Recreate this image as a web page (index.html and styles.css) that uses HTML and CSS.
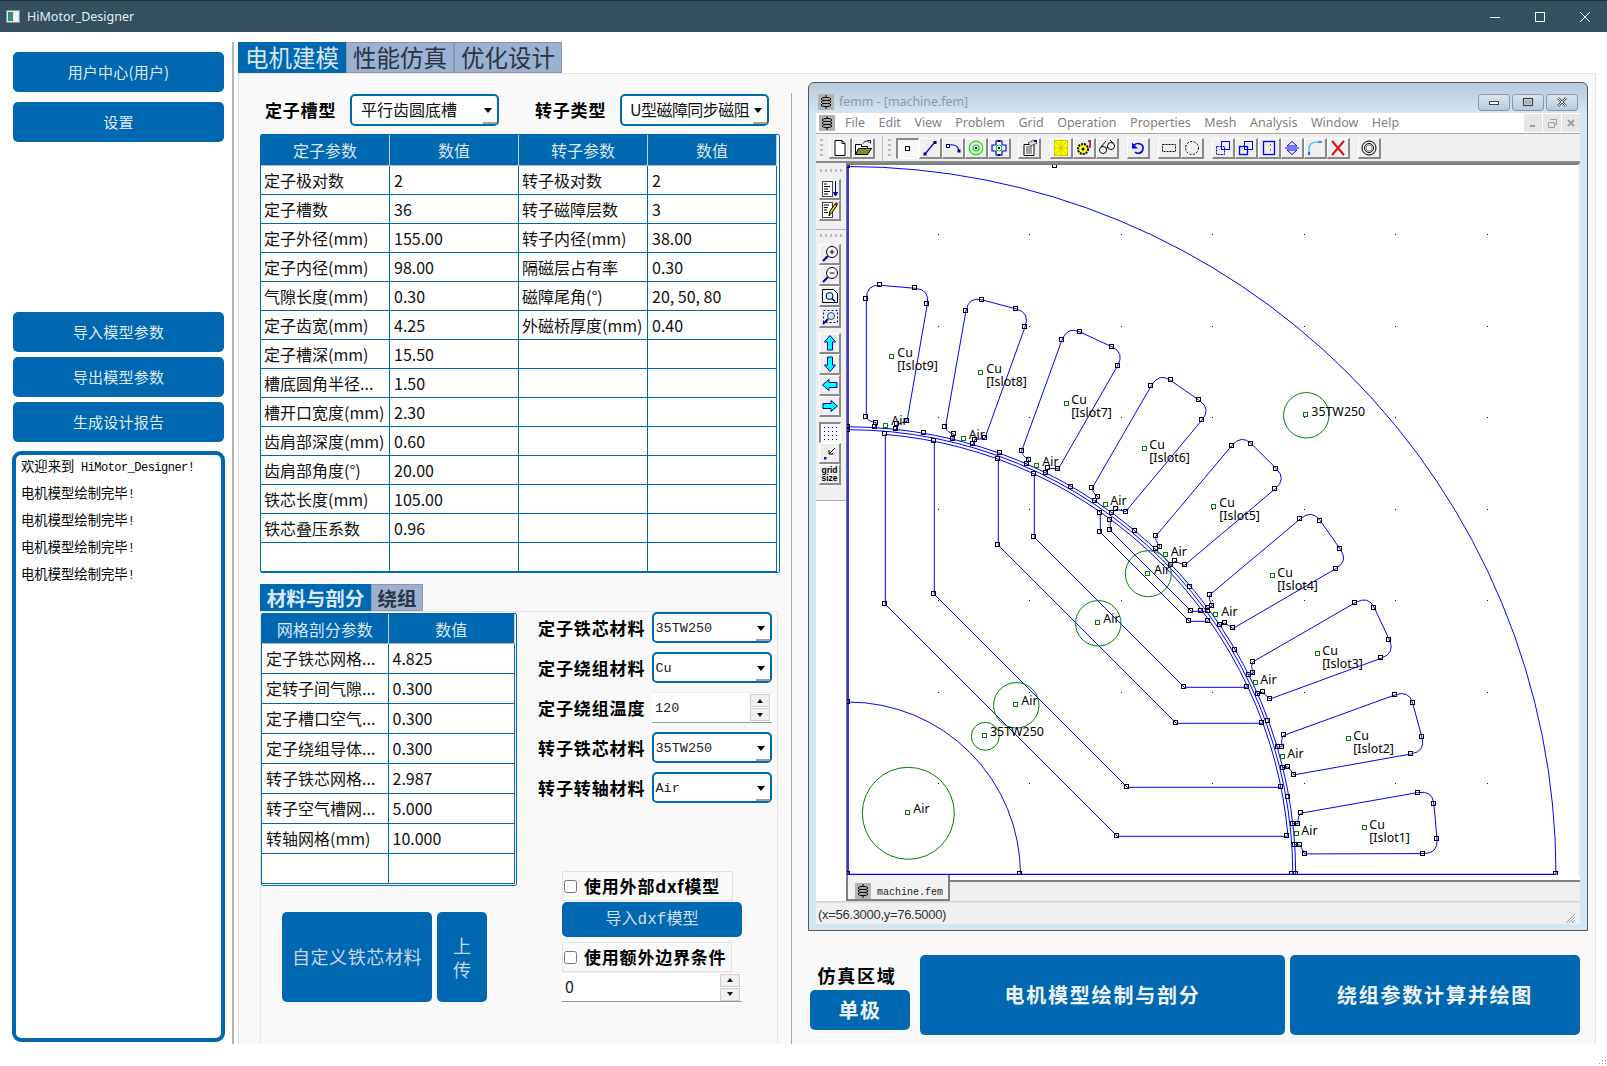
FILE: index.html
```html
<!DOCTYPE html>
<html lang="zh">
<head>
<meta charset="utf-8">
<title>HiMotor_Designer</title>
<link rel="stylesheet" href="styles.css">
</head>
<body>
<header class="titlebar">
  <svg class="app-icon" viewBox="0 0 14 13"><rect x="0.5" y="0.5" width="13" height="12" fill="#dfe6ea" stroke="#8c979d"/><rect x="2" y="2" width="5" height="9" fill="#2f8f6f"/><rect x="8" y="2" width="4" height="9" fill="#f4f6f7"/></svg>
  <span class="app-name">HiMotor_Designer</span>
  <div class="caption">
    <span class="cap-btn"><svg width="12" height="12" viewBox="0 0 12 12"><path d="M1 6.5h10" stroke="#fff" fill="none"/></svg></span>
    <span class="cap-btn"><svg width="12" height="12" viewBox="0 0 12 12"><rect x="1.5" y="1.5" width="9" height="9" stroke="#fff" fill="none"/></svg></span>
    <span class="cap-btn"><svg width="12" height="12" viewBox="0 0 12 12"><path d="M1 1l10 10M11 1L1 11" stroke="#fff" fill="none"/></svg></span>
  </div>
</header>

<div class="main">
  <aside class="sidebar">
    <button class="side-btn">用户中心(用户)</button>
    <button class="side-btn side-next">设置</button>
    <button class="side-btn side-far">导入模型参数</button>
    <button class="side-btn side-close">导出模型参数</button>
    <button class="side-btn side-close">生成设计报告</button>
    <div class="log">
      <div class="log-lines">
        <p>欢迎来到<span class="log-latin"> HiMotor_Designer!</span></p>
        <p>电机模型绘制完毕<span class="log-latin">!</span></p>
        <p>电机模型绘制完毕<span class="log-latin">!</span></p>
        <p>电机模型绘制完毕<span class="log-latin">!</span></p>
        <p>电机模型绘制完毕<span class="log-latin">!</span></p>
      </div>
    </div>
  </aside>
  <div class="vline"></div>

  <div class="content">
    <nav class="tabs">
      <span class="tab tab-on">电机建模</span>
      <span class="tab">性能仿真</span>
      <span class="tab">优化设计</span>
    </nav>
    <div class="pane">
      <section class="model">
        <div class="type-row">
          <label class="type-label">定子槽型</label>
          <div class="combo combo-type"><span class="combo-cjk">平行齿圆底槽</span></div>
          <label class="type-label type-second">转子类型</label>
          <div class="combo combo-type combo-rotor"><span class="combo-cjk tight">U型磁障同步磁阻</span></div>
        </div>

        <div class="grid-wrap wrap-main">
          <table class="data data-main">
            <thead><tr><th>定子参数</th><th>数值</th><th>转子参数</th><th>数值</th></tr></thead>
            <tbody>
              <tr><td>定子极对数</td><td class="val">2</td><td>转子极对数</td><td class="val">2</td></tr>
              <tr><td>定子槽数</td><td class="val">36</td><td>转子磁障层数</td><td class="val">3</td></tr>
              <tr><td>定子外径(mm)</td><td class="val">155.00</td><td>转子内径(mm)</td><td class="val">38.00</td></tr>
              <tr><td>定子内径(mm)</td><td class="val">98.00</td><td>隔磁层占有率</td><td class="val">0.30</td></tr>
              <tr><td>气隙长度(mm)</td><td class="val">0.30</td><td>磁障尾角(°)</td><td class="val">20, 50, 80</td></tr>
              <tr><td>定子齿宽(mm)</td><td class="val">4.25</td><td>外磁桥厚度(mm)</td><td class="val">0.40</td></tr>
              <tr><td>定子槽深(mm)</td><td class="val">15.50</td><td></td><td></td></tr>
              <tr><td>槽底圆角半径...</td><td class="val">1.50</td><td></td><td></td></tr>
              <tr><td>槽开口宽度(mm)</td><td class="val">2.30</td><td></td><td></td></tr>
              <tr><td>齿肩部深度(mm)</td><td class="val">0.60</td><td></td><td></td></tr>
              <tr><td>齿肩部角度(°)</td><td class="val">20.00</td><td></td><td></td></tr>
              <tr><td>铁芯长度(mm)</td><td class="val">105.00</td><td></td><td></td></tr>
              <tr><td>铁芯叠压系数</td><td class="val">0.96</td><td></td><td></td></tr>
              <tr><td>&nbsp;</td><td></td><td></td><td></td></tr>
            </tbody>
          </table>
        </div>

        <nav class="subtabs">
          <span class="subtab subtab-on">材料与剖分</span>
          <span class="subtab">绕组</span>
        </nav>
        <div class="subpane">
          <div class="sub-left">
            <div class="grid-wrap wrap-mesh">
              <table class="data data-mesh">
                <thead><tr><th>网格剖分参数</th><th>数值</th></tr></thead>
                <tbody>
                  <tr><td>定子铁芯网格...</td><td class="val">4.825</td></tr>
                  <tr><td>定转子间气隙...</td><td class="val">0.300</td></tr>
                  <tr><td>定子槽口空气...</td><td class="val">0.300</td></tr>
                  <tr><td>定子绕组导体...</td><td class="val">0.300</td></tr>
                  <tr><td>转子铁芯网格...</td><td class="val">2.987</td></tr>
                  <tr><td>转子空气槽网...</td><td class="val">5.000</td></tr>
                  <tr><td>转轴网格(mm)</td><td class="val">10.000</td></tr>
                  <tr><td>&nbsp;</td><td></td></tr>
                </tbody>
              </table>
            </div>
            <div class="custom-row">
              <button class="blue-btn custom-btn">自定义铁芯材料</button>
              <button class="blue-btn upload-btn">上<br>传</button>
            </div>
          </div>
          <div class="sub-right">
            <div class="form">
              <label class="form-label">定子铁芯材料</label>
              <div class="combo combo-mat"><span class="mono">35TW250</span></div>
              <label class="form-label">定子绕组材料</label>
              <div class="combo combo-mat"><span class="mono">Cu</span></div>
              <label class="form-label">定子绕组温度</label>
              <div class="spin"><span class="mono spin-text">120</span><span class="spin-arrows"><i class="up"></i><i class="down"></i></span></div>
              <label class="form-label">转子铁芯材料</label>
              <div class="combo combo-mat"><span class="mono">35TW250</span></div>
              <label class="form-label">转子转轴材料</label>
              <div class="combo combo-mat"><span class="mono">Air</span></div>
            </div>
            <div class="extras">
              <label class="check check-dxf"><input type="checkbox">使用外部dxf模型</label>
              <button class="blue-btn dxf-btn">导入<span class="dxf-latin">dxf</span>模型</button>
              <label class="check check-bound"><input type="checkbox">使用额外边界条件</label>
              <div class="spin spin-wide"><span class="spin-big">0</span><span class="spin-arrows"><i class="up"></i><i class="down"></i></span></div>
            </div>
          </div>
        </div>
      </section>
      <div class="vsep"></div>

      <section class="sim">
        <div class="femm">
          <div class="femm-title">
            <svg class="coil" viewBox="0 0 16 16"><rect width="16" height="16" fill="#b3b3b3"/><path d="M8 1v2M8 13v2" stroke="#000"/><g fill="none" stroke="#000"><ellipse cx="8" cy="5" rx="5" ry="1.6"/><ellipse cx="8" cy="8" rx="5" ry="1.6"/><ellipse cx="8" cy="11" rx="5" ry="1.6"/></g></svg>
            <span class="femm-name">femm - [machine.fem]</span>
            <div class="femm-caps">
              <span class="femm-cap"><svg width="12" height="8" viewBox="0 0 12 8"><rect x="1.5" y="3.5" width="9" height="3" fill="#f4f4f4" stroke="#444"/></svg></span>
              <span class="femm-cap"><svg width="12" height="10" viewBox="0 0 12 10"><rect x="1.5" y="1.5" width="9" height="7" fill="none" stroke="#444" stroke-width="1.2"/><rect x="4" y="4" width="4" height="2" fill="#fff" stroke="#444" stroke-width=".6"/></svg></span>
              <span class="femm-cap"><svg width="12" height="10" viewBox="0 0 12 10"><path d="M2 1l8 8M10 1L2 9" stroke="#444" stroke-width="2.4" fill="none"/><path d="M2 1l8 8M10 1L2 9" stroke="#fff" stroke-width="1" fill="none"/></svg></span>
            </div>
          </div>
          <div class="femm-menu">
            <svg class="coil coil-menu" viewBox="0 0 16 16"><rect width="16" height="16" fill="#b3b3b3"/><path d="M8 1v2M8 13v2" stroke="#000"/><g fill="none" stroke="#000"><ellipse cx="8" cy="5" rx="5" ry="1.6"/><ellipse cx="8" cy="8" rx="5" ry="1.6"/><ellipse cx="8" cy="11" rx="5" ry="1.6"/></g></svg>
            <span>File</span><span>Edit</span><span>View</span><span>Problem</span><span>Grid</span><span>Operation</span><span>Properties</span><span>Mesh</span><span>Analysis</span><span>Window</span><span>Help</span>
            <div class="mdi-caps">
              <span class="mdi-cap"><svg width="10" height="10" viewBox="0 0 10 10"><path d="M2 8h5" stroke="#98a0a8" stroke-width="2"/></svg></span>
              <span class="mdi-cap"><svg width="11" height="11" viewBox="0 0 11 11"><path d="M3.5 1.5h6v5h-2M1.5 4.500h6v5h-6z" stroke="#98a0a8" fill="none"/></svg></span>
              <span class="mdi-cap"><svg width="10" height="10" viewBox="0 0 10 10"><path d="M2 2l6 6M8 2L2 8" stroke="#98a0a8" stroke-width="2"/></svg></span>
            </div>
          </div>
          <div class="femm-toolbar">
            <i class="grip"></i>
            <span class="tb"><svg viewBox="0 0 18 18"><path d="M4 1.500h7l3 3v12H4z" fill="#fff" stroke="#000"/><path d="M11 1.500v3h3" fill="none" stroke="#000"/></svg></span>
            <span class="tb"><svg viewBox="0 0 18 18"><path d="M1.500 15.500v-10h6v2h6v8z" fill="#fff" stroke="#000"/><path d="M1.500 15.500l3-6h13l-4 6z" fill="#8a8a1a" stroke="#000"/><path d="M9 4.500c2-3 5-3 6-1" fill="none" stroke="#000"/><path d="M13.500 1.500h3v3" fill="none" stroke="#00a"/></svg></span>
            <i class="tb-sep"></i><i class="grip"></i>
            <span class="tb tb-on"><svg viewBox="0 0 18 18"><rect x="6.500" y="6.500" width="4" height="4" fill="none" stroke="#000"/></svg></span>
            <span class="tb"><svg viewBox="0 0 18 18"><path d="M4 15L14 3" stroke="#00f" stroke-width="1.300"/><rect x="2.500" y="13.500" width="3" height="3" fill="#006"/><rect x="12.500" y="2" width="3" height="3" fill="#006"/></svg></span>
            <span class="tb"><svg viewBox="0 0 18 18"><path d="M4 7c2-2 9-2 11 4" fill="none" stroke="#00f" stroke-width="1.200"/><rect x="2.500" y="5.500" width="3" height="3" fill="#fff" stroke="#006"/><rect x="13.500" y="10.500" width="3" height="3" fill="#006"/></svg></span>
            <span class="tb"><svg viewBox="0 0 18 18"><circle cx="9" cy="9" r="6.800" fill="none" stroke="#0e0" stroke-width="1.200"/><circle cx="9" cy="9" r="3" fill="none" stroke="#0c0" stroke-width="1.200"/><rect x="8" y="8" width="2" height="2" fill="#006"/></svg></span>
            <span class="tb"><svg viewBox="0 0 18 18"><path d="M6 2h6v4h4v6h-4v4H6v-4H2V6h4z" fill="#fff" stroke="#00f" stroke-width="1.200"/><circle cx="9" cy="9" r="3" fill="none" stroke="#0c0"/><rect x="8" y="8" width="2" height="2" fill="#006"/><rect x="7.500" y="1" width="3" height="2" fill="#006"/><rect x="7.500" y="15" width="3" height="2" fill="#006"/></svg></span>
            <span class="tb tb-props"><svg viewBox="0 0 18 18"><path d="M4 5.500h10v11H4z" fill="#fff" stroke="#000"/><path d="M6 8h6M6 10h6M6 12h6M6 14h6" stroke="#444"/><path d="M8 4l6-3 3 3-6 3z" fill="#ddd" stroke="#555"/><rect x="14" y="1" width="3" height="2" fill="#00a"/></svg></span>
            <span class="tb tb-mesh"><svg viewBox="0 0 18 18"><rect x="2.500" y="1.500" width="13" height="15" fill="#ff0" stroke="#d0c800"/><path d="M2.500 9h13M9 1.500v15M2.500 1.500L9 9M15.500 1.500L9 9M2.500 16.500L9 9M15.500 16.500L9 9" stroke="#b8b000" stroke-width=".7" fill="none"/></svg></span>
            <span class="tb"><svg viewBox="0 0 18 18"><circle cx="8" cy="10" r="5" fill="#ff0" stroke="#000" stroke-width="2" stroke-dasharray="2 1"/><circle cx="8" cy="10" r="1.500" fill="#000"/><path d="M13 2h3M15 2v7" stroke="#a00" stroke-width="1.500"/></svg></span>
            <span class="tb"><svg viewBox="0 0 18 18"><circle cx="5" cy="11" r="3.500" fill="#fff" stroke="#000"/><circle cx="13" cy="7" r="3.500" fill="#fff" stroke="#000"/><path d="M8 9.500l2-1.500M3 8l5-6M15 4L12 1" fill="none" stroke="#000"/></svg></span>
            <span class="tb tb-gap-s"><svg viewBox="0 0 18 18"><path d="M5 6c4-3 10-1 9 4s-6 5-8 3" fill="none" stroke="#00f" stroke-width="1.600"/><path d="M3 3.500v6h6z" fill="#00f"/></svg></span>
            <span class="tb tb-gap-s"><svg viewBox="0 0 18 18"><rect x="2.500" y="5.500" width="13" height="7" fill="none" stroke="#000" stroke-dasharray="2 1"/></svg></span>
            <span class="tb"><svg viewBox="0 0 18 18"><circle cx="9" cy="9" r="6.500" fill="none" stroke="#000" stroke-dasharray="2 1.500"/></svg></span>
            <span class="tb tb-gap-s"><svg viewBox="0 0 18 18"><rect x="7.500" y="2.500" width="8" height="8" fill="none" stroke="#00f"/><rect x="2.500" y="7.500" width="8" height="8" fill="none" stroke="#00f" stroke-dasharray="2 1"/></svg></span>
            <span class="tb"><svg viewBox="0 0 18 18"><rect x="7.500" y="2.500" width="8" height="8" fill="none" stroke="#00f"/><rect x="2.500" y="7.500" width="8" height="8" fill="none" stroke="#00f" stroke-width="1.300"/></svg></span>
            <span class="tb"><svg viewBox="0 0 18 18"><rect x="3.500" y="2.500" width="11" height="13" fill="none" stroke="#00f" stroke-width="1.300"/><path d="M10 6h1M10 11h1" stroke="#000"/></svg></span>
            <span class="tb"><svg viewBox="0 0 18 18"><path d="M2 9h14" stroke="#00f"/><path d="M9 2.500l5 4.500H4zM9 15.500l5-4.500H4z" fill="none" stroke="#00f"/></svg></span>
            <span class="tb"><svg viewBox="0 0 18 18"><path d="M3 16V9c0-3 3-6 7-6h2" fill="none" stroke="#0cf" stroke-width="1.200"/><path d="M12 3h4M3 16v-3" stroke="#00f" stroke-width="1.200"/></svg></span>
            <span class="tb"><svg viewBox="0 0 18 18"><path d="M3 2l12 14M15 2L3 16" stroke="#e01010" stroke-width="2"/></svg></span>
            <span class="tb tb-gap-s"><svg viewBox="0 0 18 18"><circle cx="9" cy="9" r="7" fill="none" stroke="#000"/><circle cx="9" cy="9" r="4.500" fill="none" stroke="#000"/><circle cx="9" cy="9" r="3" fill="none" stroke="#888"/></svg></span>
          </div>
          <div class="femm-work">
            <div class="side-tools">
              <div class="lt-panel">
                <i class="hgrip"></i>
                <span class="lt"><svg viewBox="0 0 18 18"><rect x="1.500" y="1.500" width="10" height="15" fill="#fff" stroke="#444"/><path d="M3 4h3M3 6.500h6M3 9h4M3 11.500h6M3 14h4" stroke="#000"/><path d="M14.500 1v14M12.500 12.500l2 3.500 2-3.500z" stroke="#00a" fill="#00a"/></svg></span>
                <span class="lt"><svg viewBox="0 0 18 18"><rect x="1.500" y="1.500" width="10" height="15" fill="#fff" stroke="#444"/><path d="M3 4h5M3 6.500h4M3 9h3M3 11.500h4" stroke="#000"/><path d="M8 15l1-5 5-7 2 1.500-5 7z" fill="#fc0" stroke="#000"/><path d="M14 3l2 1.500 1-2-2-1.500z" fill="#a00"/></svg></span>
                <i class="lt-sep"></i>
                <i class="hgrip"></i>
                <span class="lt"><svg viewBox="0 0 18 18"><circle cx="11" cy="7" r="5.500" fill="#fff" stroke="#000"/><path d="M8.500 7h5M11 4.500v5" stroke="#000"/><path d="M7 11l-5 5" stroke="#00a" stroke-width="2.200"/></svg></span>
                <span class="lt"><svg viewBox="0 0 18 18"><circle cx="11" cy="7" r="5.500" fill="#fff" stroke="#000"/><path d="M8.500 7h5" stroke="#000"/><path d="M7 11l-5 5" stroke="#00a" stroke-width="2.200"/></svg></span>
                <span class="lt"><svg viewBox="0 0 18 18"><path d="M1.500 2.500h11l4 4v9h-15z" fill="#fff" stroke="#000"/><circle cx="8.500" cy="9" r="3.500" fill="#bfefff" stroke="#000"/><path d="M11 11.500l3 3" stroke="#00a" stroke-width="1.600"/></svg></span>
                <span class="lt lt-last"><svg viewBox="0 0 18 18"><rect x="2.500" y="2.500" width="14" height="12" fill="none" stroke="#00a" stroke-dasharray="2 2"/><circle cx="10" cy="8" r="3.500" fill="#bfefff" stroke="#444"/><path d="M7 11l-5 5" stroke="#00a" stroke-width="2"/></svg></span>
                <span class="lt"><svg viewBox="0 0 18 18"><path d="M9 1.500l5.500 6.500h-3v8h-5V8h-3z" fill="#0ff" stroke="#00a"/></svg></span>
                <span class="lt"><svg viewBox="0 0 18 18"><path d="M9 16.500l5.500-6.500h-3V2h-5v8h-3z" fill="#0ff" stroke="#00a"/></svg></span>
                <span class="lt"><svg viewBox="0 0 18 18"><path d="M1.500 9L8 3.500v3h8v5H8v3z" fill="#0ff" stroke="#00a"/></svg></span>
                <span class="lt lt-last"><svg viewBox="0 0 18 18"><path d="M16.500 9L10 3.500v3H2v5h8v3z" fill="#0ff" stroke="#00a"/></svg></span>
                <span class="lt lt-on"><svg viewBox="0 0 18 18"><path d="M2 3.500h14M2 7.500h14M2 11.500h14M2 15.500h14" stroke="#00f" stroke-dasharray="1 3"/></svg></span>
                <span class="lt"><svg viewBox="0 0 18 18"><path d="M14 4L8 10M8 6v4h4" stroke="#000" fill="none"/><rect x="3" y="13" width="2.500" height="2.500" fill="#00f"/></svg></span>
                <span class="lt lt-text">grid<br>size</span>
              </div>
            </div>
            <div class="canvas">
              <svg id="drawing" class="drawing" viewBox="847 165 731 710" width="731" height="710">
                <g fill="none" stroke="#00f" stroke-width="1">
                  <path d="M848 166.500A708 708 0 0 1 1556 874.500"/>
                  <path d="M848 702A172.500 172.500 0 0 1 1020.500 874.500"/>
                  <path d="M848 426.800A447.700 447.700 0 0 1 1295.700 874.500"/>
                  <path d="M848 429.700A444.800 444.800 0 0 1 1292.800 874.500"/>
                  <path d="M885.300 434.400A441.700 441.700 0 0 1 1288 836.300"/>
                  <path d="M885.300 434.400V604.300L1117.300 836.300H1287.300"/>
                  <path d="M934.300 441.300V594.300L1127.300 787.300H1280.700"/>
                  <path d="M998.300 459.300V545.300L1176.300 723.300H1262.300"/>
                  <path d="M1034.300 474.300V537.300L1184.300 687.300H1247.300"/>
                  <path d="M1100.300 513.300V532.300L1189.300 621.300H1208.300"/>
                  <path d="M1110.300 520.300V530.300L1191.300 611.300H1207.700"/>
                  <path d="M848 165V875M847 874.500H1556" stroke-width="1.600"/>
                </g>
                <g id="slots" fill="none" stroke="#00f" stroke-width="1"></g>
                <g fill="none" stroke="#008000" stroke-width="1">
                  <circle cx="1148.300" cy="573.700" r="23"/>
                  <circle cx="1098.300" cy="623.300" r="22.700"/>
                  <circle cx="1016.300" cy="705.300" r="22.700"/>
                  <circle cx="985.300" cy="736.300" r="14"/>
                  <circle cx="908.300" cy="813.300" r="46"/>
                  <circle cx="1306.300" cy="415.300" r="22.700"/>
                </g>
                <g id="dots" fill="#000080"></g>
                <g id="nodes" fill="none" stroke="#000" stroke-width="1" shape-rendering="crispEdges"></g>
                <g id="blocks" fill="none" stroke="#008000" stroke-width="1" shape-rendering="crispEdges"></g>
                <g class="draw-text" transform="translate(0 .7)">
                  <text x="897.300" y="356.700">Cu</text><text x="897.300" y="369.300">[Islot9]</text>
                  <text x="986.300" y="372.700">Cu</text><text x="986.300" y="385.300">[Islot8]</text>
                  <text x="1071.300" y="403.700">Cu</text><text x="1071.300" y="416.300">[Islot7]</text>
                  <text x="1149.300" y="448.700">Cu</text><text x="1149.300" y="461.300">[Islot6]</text>
                  <text x="1219.300" y="506.700">Cu</text><text x="1219.300" y="519.300">[Islot5]</text>
                  <text x="1277.300" y="576.700">Cu</text><text x="1277.300" y="589.300">[Islot4]</text>
                  <text x="1322.300" y="654.700">Cu</text><text x="1322.300" y="667.300">[Islot3]</text>
                  <text x="1353.300" y="739.700">Cu</text><text x="1353.300" y="752.300">[Islot2]</text>
                  <text x="1369.300" y="828.700">Cu</text><text x="1369.300" y="841.300">[Islot1]</text>
                  <text x="891.300" y="424.300">Air</text>
                  <text x="968.700" y="437.900">Air</text>
                  <text x="1042.300" y="464.900">Air</text>
                  <text x="1110.300" y="503.900">Air</text>
                  <text x="1170.700" y="555.300">Air</text>
                  <text x="1221.300" y="614.900">Air</text>
                  <text x="1260.300" y="682.900">Air</text>
                  <text x="1287.300" y="756.900">Air</text>
                  <text x="1301.300" y="833.900">Air</text>
                  <text x="1154" y="573">Air</text>
                  <text x="1103.300" y="622">Air</text>
                  <text x="1021.300" y="704">Air</text>
                  <text x="990" y="735.700">35TW250</text>
                  <text x="913.300" y="812.700">Air</text>
                  <text x="1311.300" y="415">35TW250</text>
                </g>
              </svg>
            </div>
          </div>
          <div class="femm-tabs">
            <div class="tab-track">
              <div class="doc-tab">
                <svg class="coil coil-tab" viewBox="0 0 16 16"><rect width="16" height="16" fill="#b3b3b3"/><path d="M8 1v2M8 13v2" stroke="#000"/><g fill="none" stroke="#000"><ellipse cx="8" cy="5" rx="5" ry="1.600"/><ellipse cx="8" cy="8" rx="5" ry="1.600"/><ellipse cx="8" cy="11" rx="5" ry="1.600"/></g></svg>
                <span class="doc-name">machine.fem</span>
              </div>
            </div>
          </div>
          <div class="femm-status">
            <span class="coords">(x=56.3000,y=76.5000)</span>
            <svg class="status-grip" width="12" height="12" viewBox="0 0 12 12"><path d="M11 2L2 11M11 5L5 11M11 8l-3 3" stroke="#999" fill="none"/></svg>
          </div>
        </div>

        <div class="sim-bar">
          <div class="region">
            <label class="region-label">仿真区域</label>
            <button class="blue-btn action region-btn">单极</button>
          </div>
          <button class="blue-btn action draw-btn">电机模型绘制与剖分</button>
          <button class="blue-btn action wind-btn">绕组参数计算并绘图</button>
        </div>
      </section>
    </div>
  </div>
</div>
<svg class="page-grip" width="10" height="10" viewBox="0 0 10 10"><path d="M8 1h1v1H8zM5 4h1v1H5zM8 4h1v1H8zM2 7h1v1H2zM5 7h1v1H5zM8 7h1v1H8z" fill="#999"/></svg>
<script src="app.js"></script>
</body>
</html>
```
FILE: styles.css
```css
* { box-sizing: border-box; }
html, body { margin: 0; padding: 0; }
body {
  width: 1607px; height: 1066px; overflow: hidden; position: relative;
  background: #fff; color: #000;
  font-family: "Noto Sans CJK SC", "Noto Sans", sans-serif;
}
button { font-family: inherit; border: 0; padding: 0; cursor: default; }
p { margin: 0; }

/* title bar */
.titlebar {
  height: 32px; display: flex; align-items: center;
  background: #34505f; border-top: 1px solid #20303a; color: #e6edf1;
}
.app-icon { width: 14px; height: 13px; margin-left: 6px; }
.app-name { margin: 0 0 0 7px; font: 12.5px/18px "Noto Sans", sans-serif; }
.caption { margin-left: auto; display: flex; }
.cap-btn { width: 45px; height: 31px; display: flex; align-items: center; justify-content: center; }

/* layout */
.main { height: 1012px; display: flex; }
.sidebar { width: 232px; padding: 20px 0 0 13px; display: flex; flex-direction: column; }
.vline { width: 2px; margin-top: 10px; background: #b4b4b4; }
.content { width: 1358px; margin-left: 4px; display: flex; flex-direction: column; }

/* sidebar */
.side-btn {
  width: 211px; height: 40px; border-radius: 5px; padding-bottom: 2px;
  background: #0068b0; color: #dfe9f2; font-size: 15px; letter-spacing: .2px;
}
.side-next { margin-top: 10px; }
.side-far { margin-top: 170px; }
.side-close { margin-top: 5px; }
.log {
  width: 213px; height: 591px; margin: 9px 0 0 -1px;
  background: #fff; border: 4px solid #0068b0; border-radius: 9px; padding-left: 5px;
}
.log-lines { margin-top: -3px; }
.log p { font-size: 13.33px; height: 27px; line-height: 27px; white-space: pre; overflow: hidden; }
.log-latin { font-family: "Liberation Mono", monospace; font-size: 12px; letter-spacing: -.53px; }

/* tabs */
.tabs { margin-top: 10px; height: 31px; display: flex; }
.tab {
  width: 108px; height: 31px; background: #9ab1d3; border: 1px solid #8d97a6;
  color: #2b3440; font-size: 23.5px; line-height: 29px; text-align: center;
}
.tab-on { background: #0068b0; border-color: #0068b0; color: #d6e4f0; }
.pane { flex: 1; display: flex; background: #f9f9f9; border: 1px solid #e4e4e4; border-bottom: 0; }

/* model */
.model { width: 552px; padding-left: 21px; display: flex; flex-direction: column; }
.vsep { width: 1px; margin-top: 19px; background: #a6a6a6; }
.type-row { margin-top: 20px; height: 32px; display: flex; align-items: center; }
.type-label { margin-left: 5px; font-size: 17px; font-weight: 700; letter-spacing: .8px; line-height: 24px; width: 85px; white-space: nowrap; }
.type-second { margin-left: 36px; }
.combo {
  position: relative; display: flex; align-items: center;
  background: #fff; border: 2.5px solid #0068b0; border-radius: 5px;
}
.combo::before {
  content: ""; position: absolute; right: 5px; top: 50%; margin-top: -2px;
  border: 4px solid transparent; border-top: 5px solid #000; border-bottom: 0;
}
.combo::after {
  content: ""; position: absolute; right: 0; bottom: 0; width: 14px; height: 2px; background: #a0a0a0;
}
.combo-type { width: 149px; height: 32px; padding: 0 0 2px 9px; }
.combo-cjk { font-size: 16px; line-height: 22px; white-space: nowrap; color: #111; }
.tight { letter-spacing: -.55px; margin-left: 0; }
.combo-rotor { padding-left: 8px; }

/* tables */
.grid-wrap { border: 1px solid #0068b0; border-radius: 2px; background: #fff; }
.wrap-main { width: 520px; height: 439px; margin-top: 8px; }
.wrap-mesh { width: 256px; height: 273px; margin: 1px 0 0 0; }
.data { border-collapse: separate; border-spacing: 0; table-layout: fixed; }
.data-main { width: 516px; }
.data-mesh { width: 253px; }
.data th {
  background: #0068b0; color: #dbe6f0; font-size: 16px; font-weight: 400;
  line-height: 20px; padding: 0; border-right: 1px solid #c5ccd4; border-bottom: 1px solid #aeb6bf;
}
.data td {
  padding: 0 0 0 3px; font-size: 16px; line-height: 22px; color: #111; white-space: nowrap; overflow: hidden;
  border-right: 1px solid #0068b0; border-bottom: 1px solid #0068b0; background: #fff;
}
.data td.val { padding-left: 4px; }
.data-main th { height: 31px; }
.data-main td { height: 29px; }
.data-mesh th { height: 30px; padding: 0; }
.data-mesh td { height: 30px; padding: 0 0 2px 4px; }
.data-mesh td.val { padding: 0 0 2px 4px; }

/* sub tabs */
.subtabs { margin-top: 11px; height: 27px; display: flex; }
.subtab {
  width: 52px; height: 27px; background: #9ab1d3; border: 1px solid #8d97a6;
  color: #2b3440; font-size: 19.5px; font-weight: 700; line-height: 25px; text-align: center;
}
.subtab-on { width: 111px; background: #0068b0; border-color: #0068b0; color: #dce8f2; }
.subpane { flex: 1; width: 518px; display: flex; background: #f9f9f9; border: 1px solid #e6e6e6; border-bottom: 0; }
.sub-left { width: 256px; }
.sub-right { flex: 1; padding-left: 21px; }
.custom-row { margin: 26px 0 0 21px; display: flex; gap: 5px; }
.blue-btn { background: #0068b0; color: #c5d6e6; border-radius: 5px; }
.custom-btn { width: 150px; height: 90px; font-size: 18px; letter-spacing: .6px; padding-bottom: 2px; }
.upload-btn { width: 50px; height: 90px; font-size: 18px; line-height: 24px; }

/* form */
.form { margin-top: 0; display: grid; grid-template-columns: 114px 119.5px; grid-auto-rows: 31px; row-gap: 9px; align-items: center; }
.form-label { font-size: 17px; font-weight: 700; letter-spacing: .9px; line-height: 24px; white-space: nowrap; }
.combo-mat { height: 31px; padding-left: 1.500px; }
.mono { font-family: "Liberation Mono", monospace; font-size: 13.5px; color: #222; line-height: 18px; padding-top: 2px; }
.spin {
  position: relative; height: 31px; background: #fff; border-bottom: 1px solid #9a9a9a;
  display: flex; align-items: center; justify-content: space-between;
  border-top: 1px solid #eee;
}
.spin-text { padding-left: 3px; }
.spin-big { padding: 0 0 2px 3px; font-size: 16px; color: #222; line-height: 20px; }
.spin-arrows { width: 20px; height: 27px; margin-right: 2px; display: flex; flex-direction: column; gap: 1px; }
.spin-arrows i {
  flex: 1; background: #f0f0f0; border: 1px solid #cfcfcf; position: relative; display: block;
}
.spin-arrows i::before {
  content: ""; position: absolute; left: 50%; top: 50%; margin: -2px 0 0 -3px;
  border: 3px solid transparent; border-bottom: 0;
}
.spin-arrows .down::before { border-top: 4px solid #111; }
.spin-arrows .up::before { border-top: 0; border-bottom: 4px solid #111; }
.extras { margin: 68px 0 0 24px; display: flex; flex-direction: column; align-items: flex-start; }
.check {
  height: 30px; display: flex; align-items: center; white-space: nowrap;
  background: #f9f9f9; border: 1px solid #e2e2e2; font-size: 17px; font-weight: 700; letter-spacing: .8px; line-height: 24px;
}
.check input { width: 13px; height: 13px; margin: 0 7px 0 1px; }
.check-dxf { width: 171px; }
.check-bound { width: 170px; margin-top: 5px; }
.dxf-btn { width: 180px; height: 35px; margin-top: 1px; padding-bottom: 2px; font-size: 16px; line-height: 22px; color: #cfdeeb; }
.dxf-latin { font-family: "Liberation Mono", monospace; font-size: 16px; }
.spin-wide { width: 180px; height: 30px; }

/* sim */
.sim { flex: 1; display: flex; flex-direction: column; padding: 8px 0 0 16px; }
.femm {
  width: 780px; height: 849px; display: flex; flex-direction: column;
  padding: 0 7px 7px 7px;
  border: 1px solid #555; border-radius: 6px 6px 0 0;
  background: linear-gradient(#b7cadb 0, #d6e5f2 31px);
}
.femm-title { height: 30px; flex: none; display: flex; align-items: center; padding: 8px 2px 0 2px; }
.coil { width: 16px; height: 16px; flex: none; }
.femm-name { margin-left: 5px; font: 12.4px/18px "Noto Sans", sans-serif; color: #8d9aa6; }
.femm-caps { margin-left: auto; display: flex; gap: 2px; }
.femm-cap {
  width: 32px; height: 17px; display: flex; align-items: center; justify-content: center;
  background: linear-gradient(#dbe5ef, #b8c9db); border: 1px solid #8499b4; border-radius: 3px;
}
.femm-menu {
  height: 20px; flex: none; display: flex; align-items: center; gap: 13.5px; background: #fff; padding-left: 4px;
  font: 12.5px/18px "Noto Sans", sans-serif; color: #7f7f7f; position: relative;
}
.coil-menu { margin-right: -3.5px; margin-left: -1px; }
.mdi-caps { margin-left: auto; display: flex; gap: 1px; }
.mdi-cap { width: 18px; height: 18px; background: #e6e6e6; display: flex; align-items: center; justify-content: center; }
.femm-toolbar {
  height: 30px; flex: none; display: flex; align-items: center;
  background: #f0f0f0; border-top: 1px solid #a8a8a8; border-bottom: 2px solid #8a8a8a; padding: 2px 0 0 4px;
}
.grip { width: 3px; height: 20px; flex: none; background: repeating-linear-gradient(#bbb 0 2px, transparent 2px 5px); }
.tb {
  width: 23px; height: 21px; flex: none; display: flex; align-items: center; justify-content: center;
  background: #efefef; border-top: 1px solid #fff; border-left: 1px solid #fff;
  border-right: 2px solid #8a8a8a; border-bottom: 2px solid #8a8a8a;
}
.tb svg, .lt svg { width: 18px; height: 18px; }
.femm-toolbar > .grip:first-child { margin-right: 6px; margin-left: 0; }
.tb-sep { width: 1px; height: 26px; margin: 0 5px 0 7px; background: #bdbdbd; flex: none; }
.femm-toolbar > .tb-sep + .grip { margin-right: 5px; }
.tb-props { margin-left: 7px; }
.tb-mesh { margin-left: 9px; }
.tb-gap-s { margin-left: 8px; }
.tb-on { background: #f7f7f7; border-top: 2px solid #8a8a8a; border-left: 2px solid #8a8a8a; border-right: 1px solid #fff; border-bottom: 1px solid #fff; }

.femm-work { flex: none; height: 712px; display: flex; }
.side-tools { width: 30px; flex: none; background: #fff; }
.lt-panel { height: 338px; background: #f0f0f0; border-bottom: 1px solid #a8a8a8; padding: 3.5px 0 0 3px; display: flex; flex-direction: column; }
.hgrip { width: 22px; height: 3px; margin: 2px 0 7px 1px; flex: none; background: repeating-linear-gradient(90deg, #bbb 0 2px, transparent 2px 5px); }
.lt {
  width: 22px; height: 21px; flex: none; display: flex; align-items: center; justify-content: center;
  background: #efefef; border-top: 1px solid #fff; border-left: 1px solid #fff;
  border-right: 2px solid #8a8a8a; border-bottom: 2px solid #8a8a8a;
}
.lt-sep { height: 1px; margin: 8px 0 2px -3px; width: 30px; background: #b5b5b5; flex: none; }
.lt-last { margin-bottom: 5px; }
.lt-on { background: #f7f7f7; border-top: 2px solid #8a8a8a; border-left: 2px solid #8a8a8a; border-right: 1px solid #fff; border-bottom: 1px solid #fff; }
.lt-text { font: 8.5px/8px "Liberation Sans", sans-serif; text-align: center; color: #000; font-weight: 700; }
.canvas { width: 734px; flex: none; background: #fff; border-left: 1px solid #777; border-top: 2px solid #808080; border-right: 2px solid #efefef; overflow: hidden; }
.drawing { display: block; }
.draw-text text { font: 12.4px "Noto Sans", sans-serif; fill: #000; stroke: none; }

.femm-tabs { height: 27px; flex: none; background: #fff; padding-left: 30px; border-bottom: 1px solid #d0d0d0; }
.tab-track { height: 26px; background: linear-gradient(#fff 0 5px, #808080 5px 7px, #efefef 7px); display: flex; }
.doc-tab {
  width: 104px; height: 26px; background: #f2f2f2; border-right: 2px solid #808080; border-bottom: 2px solid #808080; border-left: 2px solid #808080;
  display: flex; align-items: center; padding: 8px 0 0 7px;
}
.coil-tab { width: 16px; height: 16px; }
.doc-name { margin: 3px 0 0 6px; font: 10px/14px "Liberation Mono", monospace; color: #222; }
.femm-status {
  height: 21px; flex: none; margin-top: 1px; background: #f0f0f0; display: flex; align-items: center; justify-content: space-between; padding: 3px 4px 0 2px;
}
.coords { font: 13px/18px "Liberation Sans", sans-serif; color: #333; letter-spacing: -.3px; }
.status-grip { margin-top: 6px; }

.sim-bar { margin: 24px 0 0 2px; height: 80px; display: flex; align-items: flex-end; }
.region { width: 100px; display: flex; flex-direction: column; align-items: center; }
.region-label { font-size: 18px; font-weight: 700; line-height: 24px; margin: 0 6px 3px 0; letter-spacing: 1.8px; }
.action { color: #eef3f8; font-size: 20px; font-weight: 700; letter-spacing: 1.8px; padding-bottom: 1px; }
.region-btn { width: 100px; height: 40px; margin-bottom: 5px; letter-spacing: 1.500px; padding-bottom: 2px; }
.draw-btn { width: 365px; height: 80px; margin-left: 10px; }
.wind-btn { width: 290px; height: 80px; margin-left: 5px; }
.page-grip { position: absolute; right: 0; bottom: 0; }
```
FILE: app.js
```js
(function () {
  var NS = 'http://www.w3.org/2000/svg';
  var CX = 848, CY = 874.5;
  function rot(p, deg) {
    var a = deg * Math.PI / 180, c = Math.cos(a), s = Math.sin(a);
    var x = p[0] - CX, y = p[1] - CY;
    return [CX + x * c - y * s, CY + x * s + y * c];
  }
  function el(parentId, name, attrs) {
    var n = document.createElementNS(NS, name);
    for (var k in attrs) n.setAttribute(k, attrs[k]);
    document.getElementById(parentId).appendChild(n);
  }
  function square(parentId, p) {
    el(parentId, 'rect', { x: Math.round(p[0]) - 2.5, y: Math.round(p[1]) - 2.5, width: 4, height: 4 });
  }
  var T = {
    j: [875.3, 427.3], a: [876.3, 422.7], ab: [868, 421.5], b: [866.3, 417.3],
    c: [866.3, 299.3], cd: [866.3, 284.1], d: [880.3, 285.3], e: [915.3, 288.3],
    ef: [930, 289.5], f: [927.3, 304.3], g: [907, 421.3], h: [897.3, 424.3], i: [896.3, 429.3]
  };
  for (var k = 0; k < 9; k++) {
    var deg = k * 10;
    var P = {};
    for (var key in T) P[key] = rot(T[key], deg);
    var f = function (q) { return q[0].toFixed(1) + ' ' + q[1].toFixed(1); };
    el('slots', 'path', {
      d: 'M' + f(P.j) + 'L' + f(P.a) + 'Q' + f(P.ab) + ' ' + f(P.b) + 'L' + f(P.c) +
         'Q' + f(P.cd) + ' ' + f(P.d) + 'L' + f(P.e) + 'Q' + f(P.ef) + ' ' + f(P.f) +
         'L' + f(P.g) + 'L' + f(P.h) + 'L' + f(P.i)
    });
    ['j', 'a', 'b', 'c', 'd', 'e', 'f', 'g', 'h', 'i'].forEach(function (n) { square('nodes', P[n]); });
    square('blocks', rot([892.3, 357.3], deg));
    square('blocks', rot([886.3, 425.7], deg));
  }
  [
    [848, 166], [1055.3, 166], [848, 427], [848, 429.5], [848, 701.5], [848, 874], [1020, 874], [1292, 874], [1296, 874], [1556, 874],
    [885.3, 434], [885.3, 604.3], [1117.3, 836.3], [1287.3, 836.3],
    [934.3, 441.3], [934.3, 594.3], [1127.3, 787.3], [1280.7, 787.3],
    [998.3, 459.3], [998.3, 545.3], [1176.3, 723.3], [1262.3, 723.3],
    [1034.3, 474.3], [1034.3, 537.3], [1184.3, 687.3], [1247.3, 687.3],
    [1100.3, 513.3], [1100.3, 532.3], [1189.3, 621.3], [1208.3, 621.3],
    [1110.3, 520.3], [1110.3, 530.3], [1191.3, 611.3], [1201.3, 611.3], [1207.7, 611.3],
    [924.3, 433.3], [1000.3, 453.3], [1071.3, 486.7], [1135.3, 531.3], [1190.3, 586.7], [1235.3, 650.3], [1268.3, 721.3], [1288, 797.3]
  ].forEach(function (p) { square('nodes', p); });
  [[1148.3, 573.7], [1098.3, 623.3], [1016.3, 705.3], [985.3, 736.3], [908.3, 813.3], [1306.3, 415.3]]
    .forEach(function (p) { square('blocks', p); });
  [938, 1029, 1121, 1212, 1304, 1395, 1487].forEach(function (x) {
    [234, 326, 417, 509, 600, 692, 783].forEach(function (y) {
      el('dots', 'rect', { x: x, y: y, width: 1, height: 1 });
    });
  });
})();
```
